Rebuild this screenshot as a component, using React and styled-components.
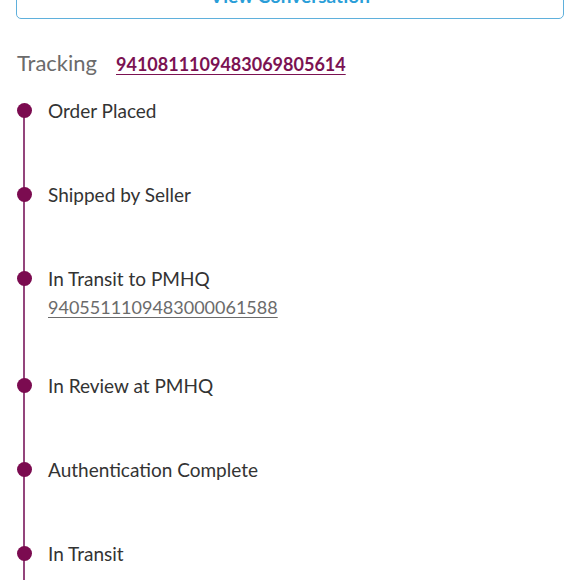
import React from "react";
import styled, { createGlobalStyle } from "styled-components";

const Global = createGlobalStyle`
  html, body {
    margin: 0;
    padding: 0;
    background: #fff;
    font-family: Lato, "Open Sans", "Liberation Sans", sans-serif;
    overflow: hidden;
  }
`;

const Page = styled.div`
  width: 580px;
  height: 580px;
  padding: 0 16px;
  box-sizing: border-box;
  overflow: hidden;
`;

const OutlineButton = styled.button`
  display: block;
  width: 548px;
  height: 48px;
  margin-top: -29px;
  background: #fff;
  border: 1.5px solid #5fb0dc;
  border-radius: 5px;
  color: #2a9ed8;
  font-family: inherit;
  font-size: 19px;
  font-weight: 700;
`;

const TrackingRow = styled.div`
  display: flex;
  align-items: baseline;
  gap: 19px;
  margin-top: 30px;
  padding-left: 1px;
  line-height: 28px;
`;

const Label = styled.span`
  color: #6b6b6b;
  font-size: 22px;
`;

const TrackLink = styled.a`
  color: #7b1252;
  font-size: 18px;
  font-weight: 700;
  text-decoration: underline;
  text-underline-offset: 3px;
`;

const Timeline = styled.ul`
  list-style: none;
  margin: 21px 0 0;
  padding: 0;
`;

const Item = styled.li`
  display: flex;
  gap: 16px;
`;

const Rail = styled.div`
  flex: 0 0 16px;
  display: flex;
  justify-content: center;
  background: linear-gradient(#94457c, #94457c) no-repeat;
  background-size: 2px 100%;
  background-position: center ${(p) => (p.$first ? "12px" : "0")};
`;

const Dot = styled.span`
  width: 15px;
  height: 15px;
  margin-top: 4px;
  border-radius: 50%;
  background: #7b0b50;
`;

const Content = styled.div`
  padding-bottom: 60px;
`;

const Title = styled.div`
  color: #333;
  font-size: 19px;
  line-height: 24px;
`;

const SubLink = styled.a`
  display: block;
  margin-top: 9px;
  color: #6b6b6b;
  font-size: 18px;
  line-height: 14px;
  text-decoration: underline;
  text-underline-offset: 3px;
`;

const steps = [
  { title: "Order Placed" },
  { title: "Shipped by Seller" },
  { title: "In Transit to PMHQ", sub: "9405511109483000061588" },
  { title: "In Review at PMHQ" },
  { title: "Authentication Complete" },
  { title: "In Transit" },
];

export default function App() {
  return (
    <Page>
      <Global />
      <OutlineButton>View Conversation</OutlineButton>
      <TrackingRow>
        <Label>Tracking</Label>
        <TrackLink>9410811109483069805614</TrackLink>
      </TrackingRow>
      <Timeline>
        {steps.map((s, i) => (
          <Item key={s.title}>
            <Rail $first={i === 0}>
              <Dot />
            </Rail>
            <Content>
              <Title>{s.title}</Title>
              {s.sub && <SubLink>{s.sub}</SubLink>}
            </Content>
          </Item>
        ))}
      </Timeline>
    </Page>
  );
}
